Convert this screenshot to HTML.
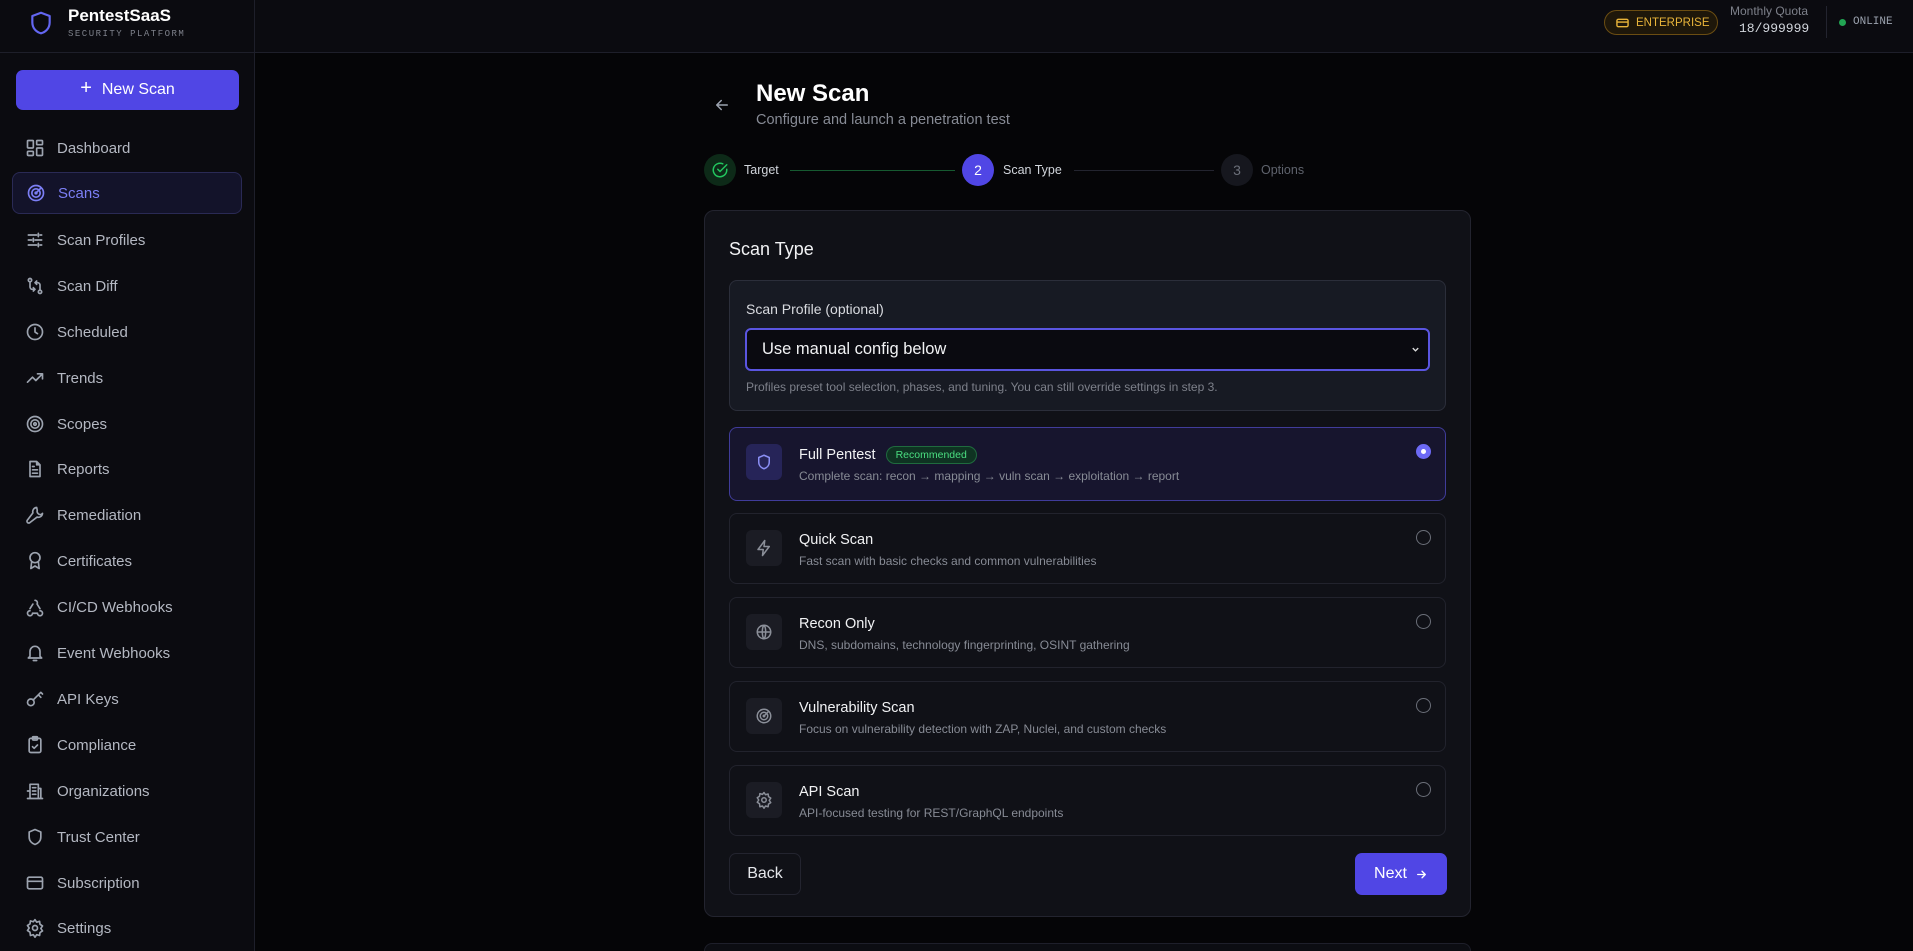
<!DOCTYPE html>
<html style="overflow:hidden;width:1913px;height:951px"><head><meta charset="utf-8"><style>
*{box-sizing:border-box;margin:0;padding:0}
body{width:1913px;height:951px;overflow:hidden;background:#050507;font-family:"Liberation Sans",sans-serif;color:#e5e7eb;position:relative}
.side{position:absolute;left:0;top:0;width:255px;height:951px;background:#0b0b10;border-right:1px solid #1e1f2a}
.top{position:absolute;left:255px;top:0;right:0;height:53px;background:#0b0b10;border-bottom:1px solid #1e1f2a}
.sidehead{position:absolute;left:0;top:0;width:255px;height:53px;border-bottom:1px solid #1e1f2a}
.nav{position:absolute;left:12px;width:230px;height:42px;display:flex;align-items:center;font-size:15px;color:#b4b8c2}
.nav svg{position:absolute;left:13px;width:20px;height:20px;fill:none;stroke:#9ca3af;stroke-width:2;stroke-linecap:round;stroke-linejoin:round}
.nav span{position:absolute;left:45px}
.nav.act{background:#13132a;border:1px solid #2a2a55;border-radius:8px;color:#7c7ff5}
.nav.act svg{stroke:#7c7ff5}
.card{position:absolute;left:704px;top:210px;width:767px;height:707px;background:#101117;border:1px solid #23242f;border-radius:10px}
.opt{position:absolute;left:24px;width:717px;height:71px;border:1px solid #22232d;border-radius:8px;background:#101117}
.opt .ib{position:absolute;left:16px;top:16px;width:36px;height:36px;border-radius:6px;background:#1b1c24}
.opt .ib svg{position:absolute;left:9px;top:9px;width:18px;height:18px;fill:none;stroke:#8b8f99;stroke-width:2;stroke-linecap:round;stroke-linejoin:round}
.opt .t{position:absolute;left:69px;top:18px;font-size:14.5px;color:#f1f2f4}
.opt .d{position:absolute;left:69px;top:40px;font-size:12px;color:#878b95}
.opt .r{position:absolute;left:686px;top:16px;width:15px;height:15px;border-radius:50%;border:1.5px solid #6b6f79}
</style></head><body>
<div class="side">
 <div class="sidehead">
  <svg style="position:absolute;left:28px;top:9px" width="26" height="28" viewBox="0 0 24 24" fill="none" stroke="#6366f1" stroke-width="2" stroke-linejoin="round"><path d="M12 2.5 4 5.5v6c0 5 3.4 8.8 8 10 4.6-1.2 8-5 8-10v-6z"/></svg>
  <div style="position:absolute;left:68px;top:6px;font-size:17px;font-weight:bold;color:#fff">PentestSaaS</div>
  <div style="position:absolute;left:68px;top:29px;font-family:'Liberation Mono',monospace;font-size:9px;letter-spacing:1.5px;color:#7d808a">SECURITY PLATFORM</div>
 </div>
 <div style="position:absolute;left:16px;top:70px;width:223px;height:40px;background:#5046e5;border-radius:7px;color:#fff;font-size:16px;display:flex;align-items:center;justify-content:center"><span style="font-size:20px;margin-right:10px;margin-top:-3px">+</span>New Scan</div>
 <div class="nav" style="top:127px"><svg viewBox="0 0 24 24"><rect x="3" y="3" width="7" height="9" rx="1"/><rect x="14" y="3" width="7" height="5" rx="1"/><rect x="14" y="12" width="7" height="9" rx="1"/><rect x="3" y="16" width="7" height="5" rx="1"/></svg><span>Dashboard</span></div>
 <div class="nav act" style="top:172px"><svg viewBox="0 0 24 24"><circle cx="12" cy="12" r="9"/><circle cx="12" cy="12" r="5"/><circle cx="12" cy="12" r="1"/><path d="M12 12l6-6"/></svg><span>Scans</span></div>
 <div class="nav" style="top:219px"><svg viewBox="0 0 24 24"><path d="M4 6h10M18 6h2M4 12h4M12 12h8M4 18h10M18 18h2M16 4v4M10 10v4M16 16v4"/></svg><span>Scan Profiles</span></div>
 <div class="nav" style="top:265px"><svg viewBox="0 0 24 24"><circle cx="6" cy="5" r="2"/><circle cx="18" cy="19" r="2"/><path d="M6 7v6a3 3 0 0 0 3 3h3M18 17v-6a3 3 0 0 0-3-3h-3M10 14l2 2-2 2M14 6l-2 2 2 2"/></svg><span>Scan Diff</span></div>
 <div class="nav" style="top:311px"><svg viewBox="0 0 24 24"><circle cx="12" cy="12" r="9"/><path d="M12 7v5l3 2"/></svg><span>Scheduled</span></div>
 <div class="nav" style="top:357px"><svg viewBox="0 0 24 24"><path d="M3 17l6-6 4 4 8-8M15 7h6v6"/></svg><span>Trends</span></div>
 <div class="nav" style="top:403px"><svg viewBox="0 0 24 24"><circle cx="12" cy="12" r="9"/><circle cx="12" cy="12" r="5"/><circle cx="12" cy="12" r="1.5"/></svg><span>Scopes</span></div>
 <div class="nav" style="top:448px"><svg viewBox="0 0 24 24"><path d="M14 3H6v18h12V7z M14 3v4h4M9 13h6M9 17h6M9 9h2"/></svg><span>Reports</span></div>
 <div class="nav" style="top:494px"><svg viewBox="0 0 24 24"><path d="M14.7 6.3a4 4 0 0 0 5 5L21 10a5 5 0 0 1-6.5 4.5L6 21a2 2 0 0 1-3-3l6.5-8.5A5 5 0 0 1 14 3z"/></svg><span>Remediation</span></div>
 <div class="nav" style="top:540px"><svg viewBox="0 0 24 24"><circle cx="12" cy="8" r="6"/><path d="M8 13l-1 8 5-3 5 3-1-8"/></svg><span>Certificates</span></div>
 <div class="nav" style="top:586px"><svg viewBox="0 0 24 24"><path d="M18 16.5a3 3 0 1 1-3 3H9M6 16.5a3 3 0 1 0 3 3M12 4a3 3 0 0 1 2.5 4.5L18 14M9.5 8.5 6 14"/></svg><span>CI/CD Webhooks</span></div>
 <div class="nav" style="top:632px"><svg viewBox="0 0 24 24"><path d="M6 16V10a6 6 0 0 1 12 0v6l2 2H4z M10 21h4"/></svg><span>Event Webhooks</span></div>
 <div class="nav" style="top:678px"><svg viewBox="0 0 24 24"><circle cx="7" cy="16" r="4"/><path d="M10 13l9-9M16 7l3 3M19 4l2 2"/></svg><span>API Keys</span></div>
 <div class="nav" style="top:724px"><svg viewBox="0 0 24 24"><rect x="5" y="4" width="14" height="17" rx="2"/><rect x="9" y="2" width="6" height="4" rx="1"/><path d="M9 14l2 2 4-4"/></svg><span>Compliance</span></div>
 <div class="nav" style="top:770px"><svg viewBox="0 0 24 24"><path d="M6 21V4h10v17M16 9h3v12M3 21h18M3 12h3v9M9 8h4M9 12h4M9 16h4"/></svg><span>Organizations</span></div>
 <div class="nav" style="top:816px"><svg viewBox="0 0 24 24"><path d="M12 3 5 6v6c0 4.5 3 7.8 7 9 4-1.2 7-4.5 7-9V6z"/></svg><span>Trust Center</span></div>
 <div class="nav" style="top:862px"><svg viewBox="0 0 24 24"><rect x="3" y="5" width="18" height="14" rx="2"/><path d="M3 10h18"/></svg><span>Subscription</span></div>
 <div class="nav" style="top:907px"><svg viewBox="0 0 24 24"><circle cx="12" cy="12" r="3"/><path d="M12 2l2 3 3.5-1 .5 3.5 3 2-2 3 2 3-3 2-.5 3.5-3.5-1-2 3-2-3-3.5 1L6 17l-3-2 2-3-2-3 3-2 .5-3.5 3.5 1z"/></svg><span>Settings</span></div>
</div>
<div class="top">
 <div style="position:absolute;left:1349px;top:10px;width:114px;height:25px;border:1px solid #6b4d12;background:#1e170a;border-radius:13px;color:#e8b43a;font-size:11.5px;display:flex;align-items:center;padding-left:11px"><svg width="13" height="10" viewBox="0 0 14 10" style="margin-right:7px"><rect x="1" y="1" width="12" height="8" rx="1.5" fill="none" stroke="#e8b43a" stroke-width="1.5"/><path d="M1 4h12" stroke="#e8b43a" stroke-width="1.5"/></svg>ENTERPRISE</div>
 <div style="position:absolute;left:1475px;top:4px;font-size:12px;color:#7d808a">Monthly Quota</div>
 <div style="position:absolute;left:1484px;top:21px;font-family:'Liberation Mono',monospace;font-size:13px;color:#d1d5db">18/999999</div>
 <div style="position:absolute;left:1571px;top:6px;width:1px;height:32px;background:#23242f"></div>
 <div style="position:absolute;left:1584px;top:19px;width:7px;height:7px;border-radius:50%;background:#22a553"></div>
 <div style="position:absolute;left:1598px;top:16px;font-family:'Liberation Mono',monospace;font-size:11px;color:#9ca3af">ONLINE</div>
</div>

<svg style="position:absolute;left:713px;top:96px" width="18" height="18" viewBox="0 0 24 24" fill="none" stroke="#9ca3af" stroke-width="2" stroke-linecap="round" stroke-linejoin="round"><path d="M19 12H5M11 6l-6 6 6 6"/></svg>
<div style="position:absolute;left:756px;top:80px;font-size:24px;font-weight:bold;color:#fff">New Scan</div>
<div style="position:absolute;left:756px;top:112px;font-size:14.5px;color:#878b95">Configure and launch a penetration test</div>

<div style="position:absolute;left:704px;top:154px;width:32px;height:32px;border-radius:50%;background:#0d2a18"></div>
<svg style="position:absolute;left:711px;top:161px" width="18" height="18" viewBox="0 0 24 24" fill="none" stroke="#22c55e" stroke-width="2" stroke-linecap="round"><path d="M21 11v1a9 9 0 1 1-5.3-8.2"/><path d="M21 5l-9 9-3-3"/></svg>
<div style="position:absolute;left:744px;top:163px;font-size:12.5px;color:#d1d5db">Target</div>
<div style="position:absolute;left:790px;top:170px;width:165px;height:1px;background:#165a30"></div>
<div style="position:absolute;left:962px;top:154px;width:32px;height:32px;border-radius:50%;background:#5046e5;color:#fff;font-size:14px;display:flex;align-items:center;justify-content:center">2</div>
<div style="position:absolute;left:1003px;top:163px;font-size:12.5px;color:#d1d5db">Scan Type</div>
<div style="position:absolute;left:1074px;top:170px;width:140px;height:1px;background:#23242f"></div>
<div style="position:absolute;left:1221px;top:154px;width:32px;height:32px;border-radius:50%;background:#16171e;color:#6b6f79;font-size:14px;display:flex;align-items:center;justify-content:center">3</div>
<div style="position:absolute;left:1261px;top:163px;font-size:12.5px;color:#5f636d">Options</div>

<div class="card">
 <div style="position:absolute;left:24px;top:28px;font-size:18px;color:#f1f2f4">Scan Type</div>
 <div style="position:absolute;left:24px;top:69px;width:717px;height:131px;background:#171a23;border:1px solid #2b2e3a;border-radius:8px">
  <div style="position:absolute;left:16px;top:20px;font-size:14px;color:#d9dbe0">Scan Profile (optional)</div>
  <div style="position:absolute;left:15px;top:47px;width:685px;height:43px;background:#0a0a10;border:2px solid #5a55e0;border-radius:6px;font-size:16.5px;color:#f1f2f4;padding:10px 0 0 15px">Use manual config below<svg style="position:absolute;right:8px;top:15px" width="9" height="9" viewBox="0 0 10 10" fill="none" stroke="#ddd" stroke-width="1.5"><path d="M2 3.5l3 3 3-3"/></svg></div>
  <div style="position:absolute;left:16px;top:99px;font-size:12px;color:#7d808a">Profiles preset tool selection, phases, and tuning. You can still override settings in step 3.</div>
 </div>
 <div class="opt" style="top:216px;height:74px;background:#17152e;border-color:#403c9a">
  <div class="ib" style="background:#262458"><svg viewBox="0 0 24 24" style="stroke:#8b8ff5"><path d="M12 3 5 6v6c0 4.5 3 7.8 7 9 4-1.2 7-4.5 7-9V6z"/></svg></div>
  <div class="t">Full Pentest <span style="display:inline-block;margin-left:6px;padding:2px 9px;font-size:10.5px;color:#4ade80;background:#0f3322;border:1px solid #1f6b3e;border-radius:10px;vertical-align:1px">Recommended</span></div>
  <div class="d" style="top:41px">Complete scan: recon → mapping → vuln scan → exploitation → report</div>
  <div class="r" style="border:none;background:#6d6af5;top:16px"><div style="position:absolute;left:5px;top:5px;width:5px;height:5px;border-radius:50%;background:#fff"></div></div>
 </div>
 <div class="opt" style="top:302px"><div class="ib"><svg viewBox="0 0 24 24"><path d="M13 2 4 14h7l-1 8 9-12h-7z"/></svg></div><div class="t">Quick Scan</div><div class="d">Fast scan with basic checks and common vulnerabilities</div><div class="r"></div></div>
 <div class="opt" style="top:386px"><div class="ib"><svg viewBox="0 0 24 24"><circle cx="12" cy="12" r="9"/><path d="M3 12h18M12 3c3 3 3 15 0 18M12 3c-3 3-3 15 0 18"/></svg></div><div class="t">Recon Only</div><div class="d">DNS, subdomains, technology fingerprinting, OSINT gathering</div><div class="r"></div></div>
 <div class="opt" style="top:470px"><div class="ib"><svg viewBox="0 0 24 24"><circle cx="12" cy="12" r="9"/><circle cx="12" cy="12" r="5"/><circle cx="12" cy="12" r="1"/><path d="M12 12l6-6"/></svg></div><div class="t">Vulnerability Scan</div><div class="d">Focus on vulnerability detection with ZAP, Nuclei, and custom checks</div><div class="r"></div></div>
 <div class="opt" style="top:554px"><div class="ib"><svg viewBox="0 0 24 24"><circle cx="12" cy="12" r="3"/><path d="M12 2l2 3 3.5-1 .5 3.5 3 2-2 3 2 3-3 2-.5 3.5-3.5-1-2 3-2-3-3.5 1L6 17l-3-2 2-3-2-3 3-2 .5-3.5 3.5 1z"/></svg></div><div class="t">API Scan</div><div class="d">API-focused testing for REST/GraphQL endpoints</div><div class="r"></div></div>
 <div style="position:absolute;left:24px;top:642px;width:72px;height:42px;border:1px solid #23242f;border-radius:7px;font-size:16px;color:#e5e7eb;display:flex;align-items:center;justify-content:center">Back</div>
 <div style="position:absolute;left:650px;top:642px;width:92px;height:42px;background:#5046e5;border-radius:7px;font-size:16px;color:#fff;display:flex;align-items:center;justify-content:center">Next<svg style="margin-left:8px" width="13" height="13" viewBox="0 0 24 24" fill="none" stroke="#fff" stroke-width="2.5" stroke-linecap="round" stroke-linejoin="round"><path d="M5 12h14M13 6l6 6-6 6"/></svg></div>
</div>
<div style="position:absolute;left:704px;top:943px;width:767px;height:8px;background:#0c0d12;border:1px solid #1e1f2a;border-bottom:none;border-radius:10px 10px 0 0"></div>
</body></html>
